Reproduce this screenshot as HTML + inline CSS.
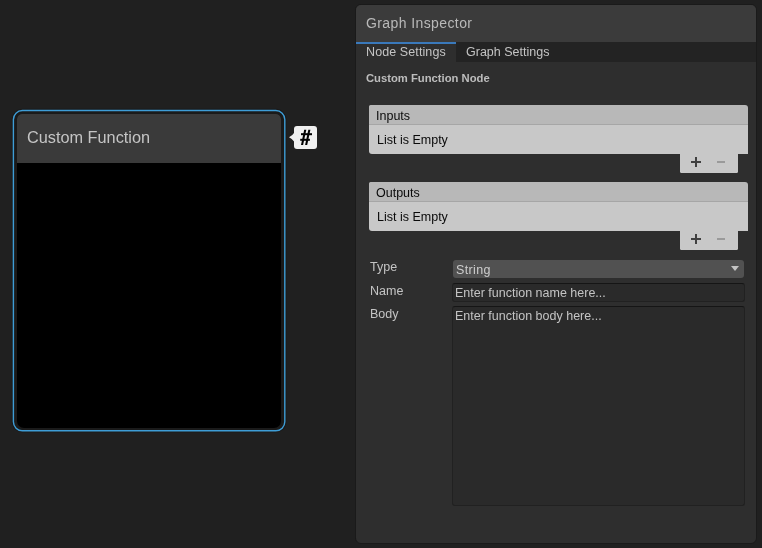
<!DOCTYPE html>
<html><head><meta charset="utf-8">
<style>
*{margin:0;padding:0;box-sizing:border-box}
html,body{width:762px;height:548px;overflow:hidden;background:#202020;font-family:"Liberation Sans",sans-serif;-webkit-font-smoothing:antialiased}
.abs{position:absolute;will-change:transform}
/* node */
#node{left:16.8px;top:113.6px;width:264.2px;height:313.8px;border-radius:5px 5px 7px 7px;background:#000;overflow:hidden;box-shadow:0 0 0 2px #1a1a1a}
#nhead{left:0;top:0;width:265px;height:49.4px;background:#3a3a3a}
#ntitle{left:11px;top:128px;font-size:16.3px;color:#c4c4c4;white-space:nowrap}
#tip{left:294px;top:126px;width:23px;height:22.5px;background:#f0f0f0;border-radius:3px}
/* panel */
#panel{left:355px;top:4px;width:402px;height:540px;background:#2e2e2e;border:1px solid #1a1a1a;border-radius:6px;overflow:hidden}
#phead{left:0;top:0;width:400px;height:37px;background:#3b3b3b}
#ptitle{left:366px;top:15px;font-size:14px;letter-spacing:.4px;color:#b9b9b9;white-space:nowrap}
#tabbar{left:356px;top:42px;width:400px;height:20px;background:#232323}
#tab1{left:356px;top:42px;width:100px;height:20px;background:#2e2e2e;border-top:2px solid #3a79bb}
.t12{font-size:12.5px;color:#c4c4c4;white-space:nowrap}
#tab1t{left:366px;top:45px;letter-spacing:.1px}
#tab2t{left:466px;top:45px}
#cfn{left:366px;top:72px;font-size:11.25px;font-weight:bold;color:#bdbdbd;white-space:nowrap}
.lhead{width:379px;height:20px;background:#b8b8b8;border-radius:1.5px 3px 0 0;border-bottom:1px solid #a6a6a6}
.lbody{width:379px;height:28.5px;background:#c8c8c8;border-radius:0 0 0 3px}
.lfoot{width:58px;height:19.6px;background:#c8c8c8;border-radius:0 0 1.5px 1.5px}
.plus{width:10px;height:10px}
.plus:before{content:"";position:absolute;left:0;top:4px;width:10px;height:2px;background:#404040}
.plus:after{content:"";position:absolute;left:4px;top:0;width:2.4px;height:10px;background:#404040}
.minus{width:8px;height:2px;background:#9a9a9a}
.dk{color:#0a0a0a;font-size:12.5px;white-space:nowrap}
.lbl{color:#c4c4c4;font-size:12.5px;white-space:nowrap}
#dd{left:453px;top:260px;width:291px;height:18px;background:#515151;border-radius:3px}
#ddt{left:456px;top:263px;color:#cdcdcd;letter-spacing:.35px}
#ddar{left:731px;top:266px;width:0;height:0;border-left:4px solid transparent;border-right:4px solid transparent;border-top:5px solid #c4c4c4}
#nm{left:452px;top:283px;width:293px;height:19px;background:#2a2a2a;border:1px solid #212121;border-top-color:#151515;border-radius:3px}
#bd{left:452px;top:306px;width:293px;height:200px;background:#2a2a2a;border:1px solid #212121;border-top-color:#151515;border-radius:3px}
</style></head><body>
<svg class="abs" style="left:0;top:0" width="762" height="548"><rect x="13.4" y="110.5" width="271.4" height="320.3" rx="9" ry="9" fill="none" stroke="rgba(24,24,24,.6)" stroke-width="3.4"/><rect x="13.4" y="110.5" width="271.4" height="320.3" rx="9" ry="9" fill="none" stroke="#3e9dd6" stroke-width="1.4"/></svg>
<div id="node" class="abs"><div id="nhead" class="abs"></div></div>
<div id="ntitle" class="abs" style="left:27px">Custom Function</div>

<div id="tip" class="abs"></div>
<svg class="abs" style="left:0;top:0" width="762" height="548"><path d="M295,131.8 Q292.6,135.6 289,137.3 Q292.6,139 295,142.4 Z" fill="#f0f0f0"/><g fill="#000"><polygon points="304.2,129.8 306.3,129.8 303.1,145 301,145"/><polygon points="308.3,129.8 310.4,129.8 307.2,145 305.1,145"/><rect x="301" y="133.2" width="11" height="2"/><rect x="300.2" y="138.8" width="9.7" height="2"/></g></svg>

<div id="panel" class="abs"><div id="phead" class="abs"></div></div>
<div id="ptitle" class="abs">Graph Inspector</div>
<div id="tabbar" class="abs"></div>
<div id="tab1" class="abs"></div>
<div id="tab1t" class="abs t12">Node Settings</div>
<div id="tab2t" class="abs t12">Graph Settings</div>
<div id="cfn" class="abs">Custom Function Node</div>

<div class="abs lhead" style="left:369px;top:105px"></div>
<div class="abs lbody" style="left:369px;top:125px"></div>
<div class="abs lfoot" style="left:680px;top:153px"></div>
<div class="abs plus" style="left:691px;top:157px"></div><div class="abs minus" style="left:717px;top:161px"></div>
<div class="abs dk" style="left:376px;top:109px">Inputs</div>
<div class="abs dk" style="left:377px;top:133px">List is Empty</div>

<div class="abs lhead" style="left:369px;top:182px"></div>
<div class="abs lbody" style="left:369px;top:202px"></div>
<div class="abs lfoot" style="left:680px;top:230px"></div>
<div class="abs plus" style="left:691px;top:234px"></div><div class="abs minus" style="left:717px;top:238px"></div>
<div class="abs dk" style="left:376px;top:186px">Outputs</div>
<div class="abs dk" style="left:377px;top:210px">List is Empty</div>

<div class="abs lbl" style="left:370px;top:260px">Type</div>
<div class="abs lbl" style="left:370px;top:284px">Name</div>
<div class="abs lbl" style="left:370px;top:307px">Body</div>
<div id="dd" class="abs"></div>
<div id="ddt" class="abs lbl">String</div>
<div id="ddar" class="abs"></div>
<div id="nm" class="abs"></div>
<div class="abs lbl" style="left:455px;top:286px">Enter function name here...</div>
<div id="bd" class="abs"></div>
<div class="abs lbl" style="left:455px;top:309px">Enter function body here...</div>
</body></html>
